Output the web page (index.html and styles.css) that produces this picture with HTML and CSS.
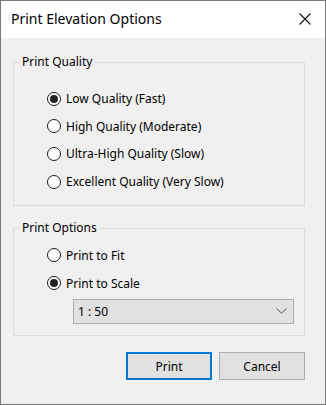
FILE: index.html
```html
<!DOCTYPE html>
<html lang="en">
<head>
  <meta charset="UTF-8">
  <title>Print Elevation Options</title>
  <link rel="stylesheet" href="styles.css">
</head>
<body>
  <div class="window">
    <div class="titlebar">
      <span class="title">Print Elevation Options</span>
      <svg class="close" width="12" height="12" viewBox="0 0 12 12">
        <path d="M0.5 0.5 L11.5 11.5 M11.5 0.5 L0.5 11.5" stroke="#111" stroke-width="1.1" fill="none"/>
      </svg>
    </div>

    <div class="content">
      <fieldset class="group quality">
        <legend>Print Quality</legend>
        <label class="radio"><span class="dot checked"></span>Low Quality (Fast)</label>
        <label class="radio"><span class="dot"></span>High Quality (Moderate)</label>
        <label class="radio"><span class="dot"></span>Ultra-High Quality (Slow)</label>
        <label class="radio"><span class="dot"></span>Excellent Quality (Very Slow)</label>
      </fieldset>

      <fieldset class="group options">
        <legend>Print Options</legend>
        <label class="radio"><span class="dot"></span>Print to Fit</label>
        <label class="radio"><span class="dot checked"></span>Print to Scale</label>
        <div class="select">
          <span>1 : 50</span>
          <svg width="11" height="6" viewBox="0 0 11 6">
            <path d="M0.5 0.5 L5.5 5.2 L10.5 0.5" stroke="#555" stroke-width="1" fill="none"/>
          </svg>
        </div>
      </fieldset>

      <div class="buttons">
        <button class="btn default" type="button">Print</button>
        <button class="btn" type="button">Cancel</button>
      </div>
    </div>
  </div>
</body>
</html>
```

FILE: styles.css
```css
body {
  margin: 0;
  font-family: 'Noto Sans', 'Open Sans', sans-serif;
  font-size: 12px;
  color: #000;
}

.window {
  width: 324px;
  height: 403px;
  border: 1px solid #7a7a7a;
  background: #f0f0f0;
  display: flex;
  flex-direction: column;
}

.titlebar {
  height: 37px;
  background: #fff;
  display: flex;
  align-items: center;
  justify-content: space-between;
  padding: 0 14px 0 10px;
}

.title {
  font-size: 14px;
  margin-top: -2px;
}

.close {
  margin-top: -1px;
}

.content {
  padding: 17px 20px 0 12px;
}

.group {
  margin: 0;
  border: 1px solid #dcdcdc;
  padding: 0;
}

.group legend {
  margin-left: 6px;
  padding: 0 2px;
  line-height: 14px;
  height: 14px;
}

.quality {
  padding-top: 16px;
  padding-bottom: 10px;
}

.options {
  margin-top: 15px;
  padding-top: 6px;
  padding-bottom: 11px;
}

.radio {
  display: flex;
  align-items: center;
  height: 27.6px;
  gap: 5px;
  margin-left: 33px;
}

.options .radio {
  height: 28px;
}

.dot {
  flex-shrink: 0;
  width: 12px;
  height: 12px;
  border: 1px solid #1a1a1a;
  border-radius: 50%;
  background: #fff;
  display: flex;
  align-items: center;
  justify-content: center;
}

.dot.checked::after {
  content: "";
  width: 8px;
  height: 8px;
  border-radius: 50%;
  background: #222;
}

.select {
  margin: 2px 10px 0 59px;
  height: 23px;
  border: 1px solid #adadad;
  background: #e1e1e1;
  display: flex;
  align-items: center;
  justify-content: space-between;
  padding: 0 6px 0 4px;
}

.select svg {
  margin-top: -1px;
}

.buttons {
  display: flex;
  justify-content: flex-end;
  gap: 7px;
  margin-top: 16px;
}

.btn {
  width: 86px;
  height: 28px;
  font-family: inherit;
  font-size: 12px;
  background: #e1e1e1;
  border: 1px solid #adadad;
  padding: 0;
  color: #000;
}

.btn.default {
  border: 2px solid #0078d7;
}
```
